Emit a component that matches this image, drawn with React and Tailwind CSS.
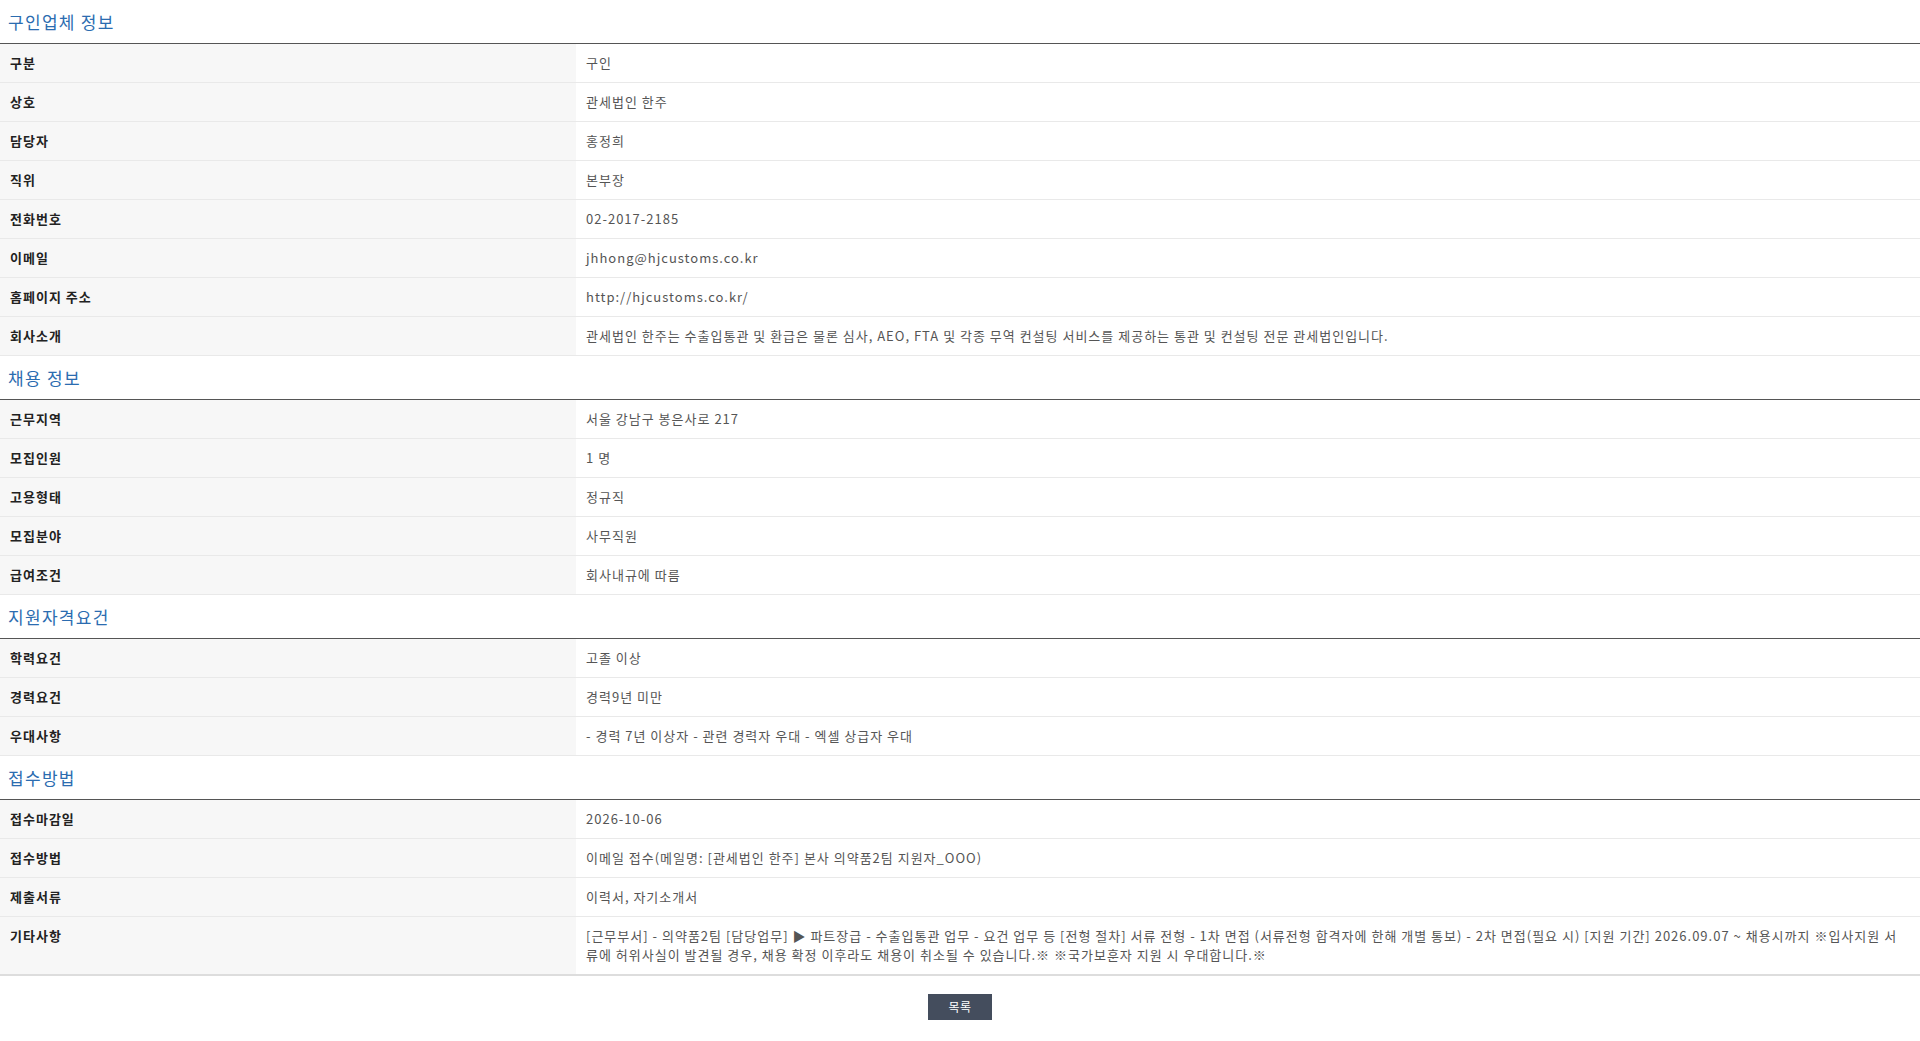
import React from "react";

// ─── Job posting data ───────────────────────────────────────────────────────
const sections = [
  {
    title: "구인업체 정보",
    rows: [
      ["구분", "구인"],
      ["상호", "관세법인 한주"],
      ["담당자", "홍정희"],
      ["직위", "본부장"],
      ["전화번호", "02-2017-2185"],
      ["이메일", "jhhong@hjcustoms.co.kr"],
      ["홈페이지 주소", "http://hjcustoms.co.kr/"],
      ["회사소개", "관세법인 한주는 수출입통관 및 환급은 물론 심사, AEO, FTA 및 각종 무역 컨설팅 서비스를 제공하는 통관 및 컨설팅 전문 관세법인입니다."],
    ],
  },
  {
    title: "채용 정보",
    rows: [
      ["근무지역", "서울 강남구 봉은사로 217"],
      ["모집인원", "1 명"],
      ["고용형태", "정규직"],
      ["모집분야", "사무직원"],
      ["급여조건", "회사내규에 따름"],
    ],
  },
  {
    title: "지원자격요건",
    rows: [
      ["학력요건", "고졸 이상"],
      ["경력요건", "경력9년 미만"],
      ["우대사항", "- 경력 7년 이상자 - 관련 경력자 우대 - 엑셀 상급자 우대"],
    ],
  },
  {
    title: "접수방법",
    rows: [
      ["접수마감일", "2026-10-06"],
      ["접수방법", "이메일 접수(메일명: [관세법인 한주] 본사 의약품2팀 지원자_OOO)"],
      ["제출서류", "이력서, 자기소개서"],
      [
        "기타사항",
        "[근무부서] - 의약품2팀 [담당업무] ▶ 파트장급 - 수출입통관 업무 - 요건 업무 등 [전형 절차] 서류 전형 - 1차 면접 (서류전형 합격자에 한해 개별 통보) - 2차 면접(필요 시) [지원 기간] 2026.09.07 ~ 채용시까지 ※입사지원 서류에 허위사실이 발견될 경우, 채용 확정 이후라도 채용이 취소될 수 있습니다.※ ※국가보훈자 지원 시 우대합니다.※",
      ],
    ],
  },
];
// ────────────────────────────────────────────────────────────────────────────

function Row({ label, value, last }) {
  return (
    <div className={`flex ${last ? "border-b-2 border-[#dddddd]" : "border-b border-[#e9e9e9]"}`}>
      <div className="w-[30%] flex-shrink-0 bg-[#f7f7f7] px-[10px] pt-[9px] pb-[10px] text-[13px] leading-[19px] tracking-[1px] font-bold text-[#222]">
        {label}
      </div>
      <div className="flex-1 px-[10px] pt-[9px] pb-[10px] text-[13px] leading-[19px] tracking-[1px] text-[#555] break-all">
        {value}
      </div>
    </div>
  );
}

export default function JobPostingDetail() {
  return (
    <div
      className="min-h-screen bg-white"
      style={{ fontFamily: '"Noto Sans CJK KR", "Noto Sans", sans-serif' }}
    >
      {sections.map((s, si) => (
        <section key={s.title}>
          <h2 className="h-[44px] flex items-center pl-2 border-b border-[#555] text-[17px] tracking-[1.3px] font-normal text-[#2b6cb0]">
            {s.title}
          </h2>
          {s.rows.map(([label, value], ri) => (
            <Row
              key={label}
              label={label}
              value={value}
              last={si === sections.length - 1 && ri === s.rows.length - 1}
            />
          ))}
        </section>
      ))}

      {/* List button */}
      <div className="flex justify-center mt-[18px] pb-5">
        <button className="w-[64px] h-[26px] bg-[#444d5d] text-white text-[12px] tracking-[0.5px]">목록</button>
      </div>
    </div>
  );
}
